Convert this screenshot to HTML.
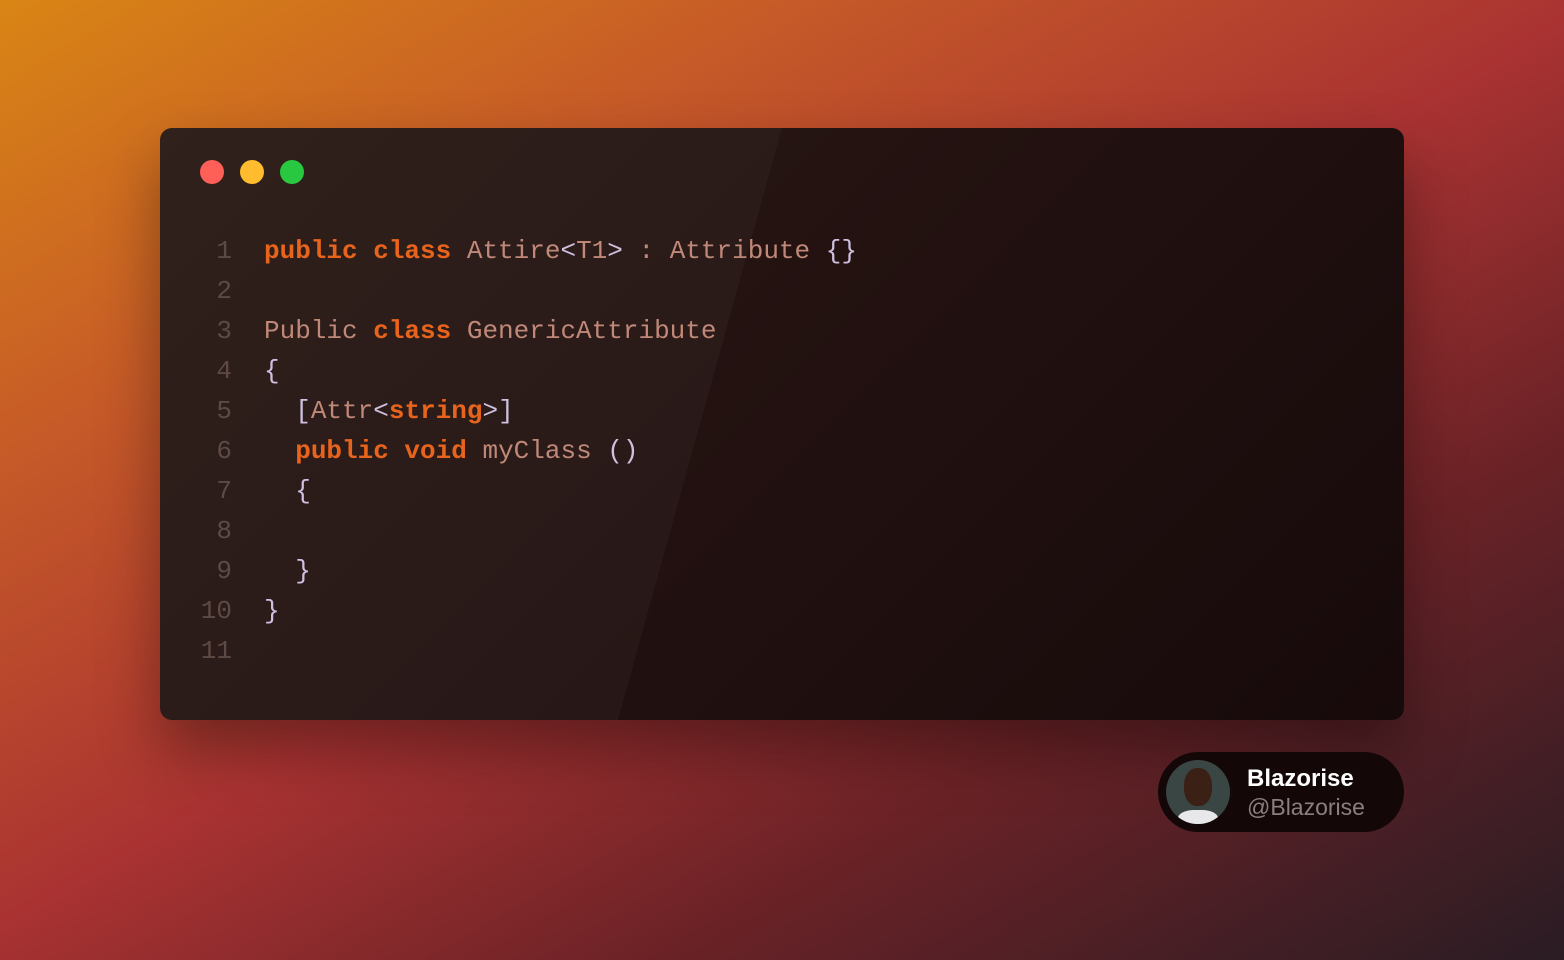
<!DOCTYPE html>
<html><head><style>
html,body{margin:0;padding:0}
body{width:1564px;height:960px;overflow:hidden;position:relative;
background:linear-gradient(150deg,#d98515 0%,#c65a28 25%,#a93232 50%,#6a2226 72%,#2a1c24 100%);
font-family:"Liberation Mono",monospace}
.win{position:absolute;left:160px;top:128px;width:1244px;height:592px;border-radius:12px;
background:linear-gradient(135deg,#2b1a15 0%,#221110 50%,#170a0b 100%);
box-shadow:0 30px 60px rgba(0,0,0,.35);overflow:hidden}
.shine{position:absolute;left:0;top:0;width:100%;height:100%;background:rgba(255,255,255,0.03);
clip-path:polygon(0 0,622px 0,458px 592px,0 592px)}
.dot{position:absolute;top:32px;width:24px;height:24px;border-radius:50%}
.code{position:absolute;left:0;top:103px;font-size:26px;line-height:40px;white-space:pre;color:#c08878}
.ln{position:absolute;left:0;width:72px;text-align:right;color:#5e4a44}
.tx{position:absolute;left:104px}
.k{color:#e8641c;font-weight:bold}
.p{color:#cfc0e0}
.badge{position:absolute;left:1158px;top:752px;width:246px;height:80px;border-radius:40px;background:#140707;font-family:"Liberation Sans",sans-serif}
.av{position:absolute;left:8px;top:8px;width:64px;height:64px;border-radius:50%;background:#3a4644;overflow:hidden}
.n{position:absolute;left:89px;top:13px;color:#fff;font-weight:bold;font-size:24px}
.h{position:absolute;left:89px;top:42px;color:#8a8080;font-size:23px}
</style></head><body>
<div class="win"><div class="shine"></div>
<div class="dot" style="left:40px;background:#fe5f57"></div>
<div class="dot" style="left:80px;background:#febc2e"></div>
<div class="dot" style="left:120px;background:#28c840"></div>
<div class="code">
<div class="ln" style="top:0">1</div><div class="tx" style="top:0"><span class="k">public class</span> Attire<span class="p">&lt;</span>T1<span class="p">&gt;</span> : Attribute <span class="p">{}</span></div>
<div class="ln" style="top:40px">2</div>
<div class="ln" style="top:80px">3</div><div class="tx" style="top:80px">Public <span class="k">class</span> GenericAttribute</div>
<div class="ln" style="top:120px">4</div><div class="tx p" style="top:120px">{</div>
<div class="ln" style="top:160px">5</div><div class="tx" style="top:160px">  <span class="p">[</span>Attr<span class="p">&lt;</span><span class="k">string</span><span class="p">&gt;]</span></div>
<div class="ln" style="top:200px">6</div><div class="tx" style="top:200px">  <span class="k">public void</span> myClass <span class="p">()</span></div>
<div class="ln" style="top:240px">7</div><div class="tx p" style="top:240px">  {</div>
<div class="ln" style="top:280px">8</div>
<div class="ln" style="top:320px">9</div><div class="tx p" style="top:320px">  }</div>
<div class="ln" style="top:360px">10</div><div class="tx p" style="top:360px">}</div>
<div class="ln" style="top:400px">11</div>
</div></div>
<div class="badge"><div class="av">
<div style="position:absolute;left:18px;top:8px;width:28px;height:38px;border-radius:45%;background:#3b2016"></div>
<div style="position:absolute;left:12px;top:50px;width:40px;height:20px;border-radius:40% 40% 0 0;background:#e8e8ea"></div>
</div>
<div class="n">Blazorise</div><div class="h">@Blazorise</div></div>
</body></html>
